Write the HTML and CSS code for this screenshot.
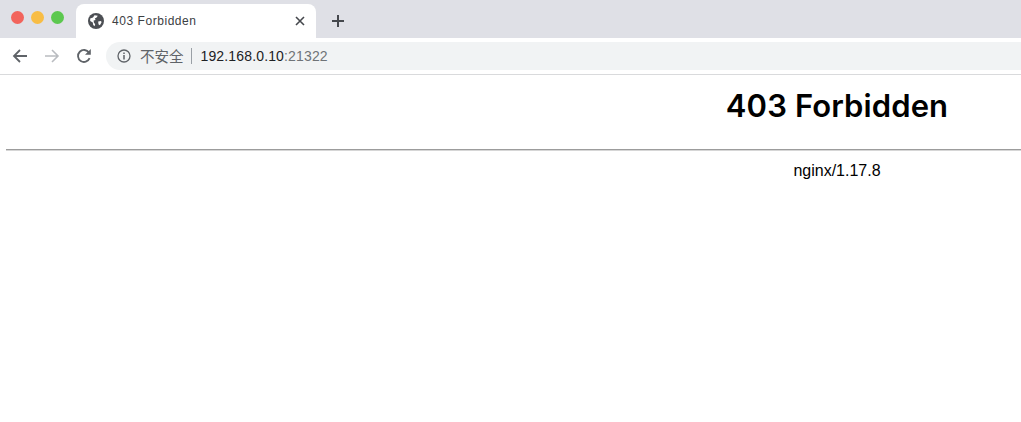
FILE: index.html
```html
<!DOCTYPE html>
<html lang="en">
<head>
  <meta charset="UTF-8">
  <title>403 Forbidden</title>
  <link rel="stylesheet" href="styles.css">
</head>
<body>
  <div class="tabstrip">
    <div class="lights">
      <span class="light red"></span>
      <span class="light yellow"></span>
      <span class="light green"></span>
    </div>
    <div class="tab">
      <svg class="favicon" width="16" height="16" viewBox="0 0 16 16">
        <circle cx="8" cy="8" r="8" fill="#4c4f54"/>
        <path d="M2.2 5.5 L5 4.5 L6.5 2.2 L9.8 2.8 L8.6 4.6 L6.8 5.6 L7.6 7 L5.6 7.6 L6 10 L7.2 11 L6.6 13.2 L5.2 12 L4.8 9.6 L2.2 8 Z" fill="#fff"/>
        <path d="M10.2 8.4 L12.8 8 L13.6 9 L12.4 11.4 L11 12.2 L10.4 10.4 Z" fill="#fff"/>
      </svg>
      <span class="tab-title">403 Forbidden</span>
      <svg class="tab-close" width="10" height="10" viewBox="0 0 10 10">
        <path d="M1 1 L9 9 M9 1 L1 9" stroke="#45484d" stroke-width="1.6" fill="none"/>
      </svg>
    </div>
    <svg class="new-tab" width="14" height="14" viewBox="0 0 14 14">
      <path d="M7 1 V13 M1 7 H13" stroke="#45484d" stroke-width="2" fill="none"/>
    </svg>
  </div>
  <div class="toolbar">
    <svg class="nav" width="16" height="16" viewBox="0 0 16 16">
      <path d="M15 8 H2 M8 2 L2 8 L8 14" stroke="#5f6368" stroke-width="1.8" fill="none"/>
    </svg>
    <svg class="nav" width="16" height="16" viewBox="0 0 16 16">
      <path d="M1 8 H14 M8 2 L14 8 L8 14" stroke="#b9bcc0" stroke-width="1.6" fill="none"/>
    </svg>
    <svg class="nav" width="16" height="16" viewBox="0 0 16 16">
      <path d="M13.6 10.2 A6 6 0 1 1 13 4.6" stroke="#5f6368" stroke-width="1.8" fill="none"/>
      <path d="M14.8 1 V6.8 H9 Z" fill="#5f6368"/>
    </svg>
    <div class="omnibox">
      <svg class="info" width="14" height="14" viewBox="0 0 14 14">
        <circle cx="7" cy="7" r="6" stroke="#5f6368" stroke-width="1.3" fill="none"/>
        <path d="M7 6 V10.5 M7 3.4 V5" stroke="#5f6368" stroke-width="1.5" fill="none"/>
      </svg>
      <span class="insecure">不安全</span>
      <span class="sep"></span>
      <span class="url">192.168.0.10<span class="port">:21322</span></span>
    </div>
  </div>
  <div class="viewport">
    <div class="page">
      <h1>403 Forbidden</h1>
      <hr>
      <p class="server">nginx/1.17.8</p>
    </div>
  </div>
</body>
</html>
```

FILE: styles.css
```css
* {
  margin: 0;
  padding: 0;
  box-sizing: border-box;
}
html, body {
  height: 100%;
  overflow: hidden;
  background-color: #fff;
}
body {
  font-family: "Liberation Sans", "Noto Sans CJK SC", sans-serif;
  color: #000;
}
.tabstrip {
  display: flex;
  align-items: flex-end;
  height: 38px;
  background-color: #dfe0e6;
}
.lights {
  display: flex;
  gap: 7px;
  width: 76px;
  height: 38px;
  padding: 11px 0 0 11px;
}
.light {
  width: 13px;
  height: 13px;
  border-radius: 50%;
}
.red { background-color: #f2645c; }
.yellow { background-color: #f8bd45; }
.green { background-color: #5cc84f; }
.tab {
  display: flex;
  align-items: center;
  width: 240px;
  height: 34px;
  padding: 0 12px;
  background-color: #fff;
  border-radius: 8px 8px 0 0;
}
.tab-title {
  flex: 1;
  margin-left: 8px;
  font-size: 12px;
  letter-spacing: 0.55px;
  color: #3c4043;
}
.tab-close {
  margin-right: -1px;
}
.new-tab {
  margin: 0 0 10px 15px;
}
.toolbar {
  display: flex;
  align-items: center;
  height: 37px;
  padding-left: 12px;
  border-bottom: 1px solid #d9dadc;
}
.nav {
  margin-right: 16px;
}
.omnibox {
  display: flex;
  align-items: center;
  flex: 1;
  height: 28px;
  margin-left: -2px;
  padding-left: 11px;
  background-color: #f1f3f4;
  border-radius: 14px 0 0 14px;
}
.insecure {
  margin: 0 0 2px 9px;
  font-size: 14.5px;
  color: #5f6368;
}
.sep {
  width: 1px;
  height: 16px;
  margin: 0 9px 0 7px;
  background-color: #9aa0a6;
}
.url {
  font-size: 14px;
  letter-spacing: 0.15px;
  color: #202124;
}
.port {
  color: #6f7377;
}
.viewport {
  overflow: hidden;
}
.page {
  width: 1662px;
  margin-left: 6px;
  text-align: center;
}
h1 {
  padding-top: 12px;
  font-family: Inter, "Liberation Sans", sans-serif;
  font-size: 31px;
  font-weight: 600;
  letter-spacing: 0.1px;
  line-height: 37px;
}
hr {
  margin-top: 25px;
  border: 0;
  border-top: 1px solid #9c9c9c;
  border-bottom: 1px solid #d6d6d6;
}
.server {
  margin-top: 11px;
  font-size: 16px;
  line-height: 18px;
}
```
